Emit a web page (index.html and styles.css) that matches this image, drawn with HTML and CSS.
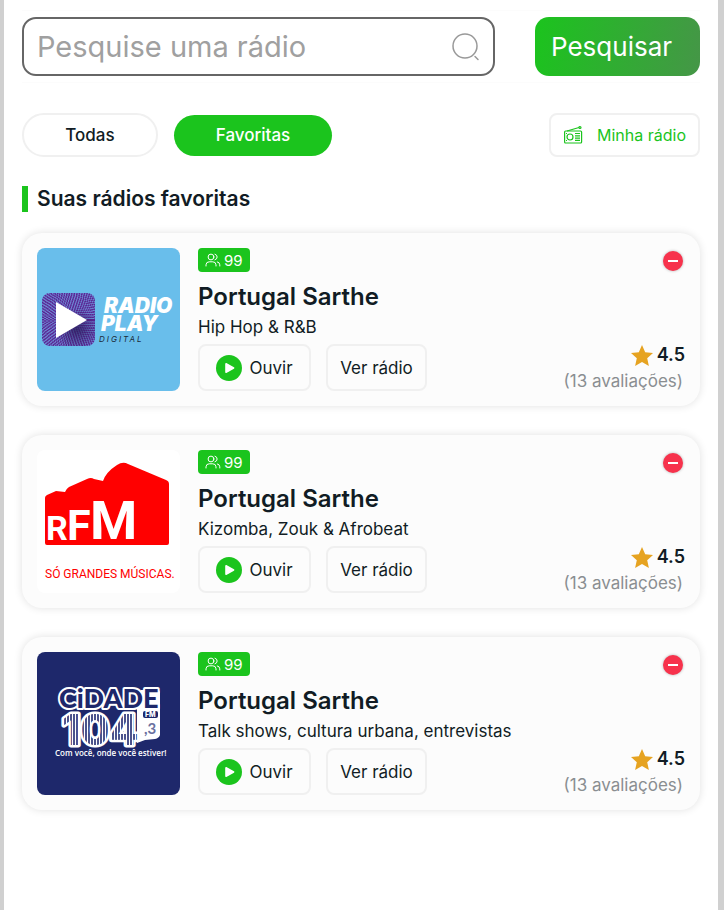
FILE: index.html
```html
<!DOCTYPE html>
<html lang="pt">
<head>
  <meta charset="UTF-8" />
  <meta name="viewport" content="width=device-width, initial-scale=1.0"/>
  <title>Rádios favoritas</title>
  <link rel="stylesheet" href="styles.css">
</head>
<body>

  <svg class="sprite" aria-hidden="true">
    <symbol id="icon-users" viewBox="0 0 16 14">
      <g fill="none" stroke="currentColor" stroke-width="1" stroke-linecap="round">
        <circle cx="6" cy="4" r="2.9"/>
        <path d="M1 13v-1.2A3.2 3.2 0 0 1 4.200 8.800h3.600A3.200 3.200 0 0 1 11 11.800V13M10 1.200a2.900 2.900 0 0 1 0 5.600M12.300 8.900a3 3 0 0 1 2.500 2.900V13"/>
      </g>
    </symbol>
    <symbol id="icon-play" viewBox="0 0 26 26">
      <circle cx="13" cy="13" r="13" fill="#1bc41d"/>
      <path d="M10 8.800v8.400l7.600-4.200z" fill="#fff" stroke="#fff" stroke-width="1.600" stroke-linejoin="round"/>
    </symbol>
    <symbol id="icon-star" viewBox="0 0 22 21">
      <path d="M11 0l3.200 7.200 7.800.8-5.800 5.200 1.700 7.800-6.900-4-6.900 4 1.700-7.800L0 8l7.800-.8z" fill="#e6a321"/>
    </symbol>
  </svg>

  <main class="page">
    <form class="search">
      <div class="search-box">
        <input type="text" aria-label="Pesquise uma rádio" placeholder="Pesquise uma rádio"/>
        <svg class="search-icon" viewBox="0 0 28 28" fill="none" stroke="#999" stroke-width="1.500" stroke-linecap="round" aria-hidden="true">
          <circle cx="13" cy="13" r="12"/>
          <path d="M23 23.500l3 3"/>
        </svg>
      </div>
      <button type="button" class="search-button">Pesquisar</button>
    </form>

    <nav class="filters">
      <button class="tab">Todas</button>
      <button class="tab active">Favoritas</button>
      <a href="#" class="my-radio">
        <svg width="20" height="20" viewBox="0 0 20 20" fill="none" stroke="currentColor" stroke-width="1.200" aria-hidden="true">
          <rect x="1.600" y="6" width="17" height="12" rx="1"/>
          <circle cx="7" cy="12" r="3"/>
          <path d="M4 6l12-3.500M12 8.500h5M12 10.800h5M12 13.100h5M12 15.400h5M3 8.500h1M3 15.500h1"/>
          <circle cx="17" cy="2.500" r="1"/>
        </svg>
        Minha rádio
      </a>
    </nav>

    <h2>Suas rádios favoritas</h2>

    <div class="radio-list">
      <article class="card">
        <svg class="cover" viewBox="0 0 143 143" role="img" aria-label="Radio Play Digital">
          <defs>
            <clipPath id="play-clip"><rect x="5" y="45" width="53" height="53" rx="8"/></clipPath>
            <radialGradient id="play-shade" cx=".65" cy=".68" r=".4">
              <stop offset="0" stop-color="#2a1c5c" stop-opacity=".8"/>
              <stop offset="1" stop-color="#2a1c5c" stop-opacity="0"/>
            </radialGradient>
          </defs>
          <rect width="143" height="143" fill="#69beeb"/>
          <g clip-path="url(#play-clip)">
            <rect x="5" y="45" width="53" height="53" fill="#6f8fd8"/>
            <g fill="none" stroke="#5a2492" stroke-width="2" stroke-dasharray="1.500 1">
              <circle cx="31" cy="72" r="3"/>
              <circle cx="31" cy="72" r="5"/>
              <circle cx="31" cy="72" r="7"/>
              <circle cx="31" cy="72" r="9"/>
              <circle cx="31" cy="72" r="11"/>
              <circle cx="31" cy="72" r="13"/>
              <circle cx="31" cy="72" r="15"/>
              <circle cx="31" cy="72" r="17"/>
              <circle cx="31" cy="72" r="19"/>
              <circle cx="31" cy="72" r="21"/>
              <circle cx="31" cy="72" r="23"/>
              <circle cx="31" cy="72" r="25"/>
              <circle cx="31" cy="72" r="27"/>
              <circle cx="31" cy="72" r="29"/>
              <circle cx="31" cy="72" r="31"/>
              <circle cx="31" cy="72" r="33"/>
              <circle cx="31" cy="72" r="35"/>
            </g>
            <rect x="5" y="45" width="53" height="53" fill="url(#play-shade)"/>
          </g>
          <path d="M19 54l31 18-31 18z" fill="#fff"/>
          <text class="play-name" x="67" y="65">RADIO</text>
          <text class="play-name" x="64" y="83">PLAY</text>
          <text class="play-sub" x="62" y="94">DIGITAL</text>
        </svg>
        <div class="info">
          <span class="listeners"><svg width="16" height="14" aria-hidden="true"><use href="#icon-users"/></svg>99</span>
          <h3>Portugal Sarthe</h3>
          <p>Hip Hop &amp; R&amp;B</p>
          <div class="actions">
            <button class="listen"><svg width="26" height="26" aria-hidden="true"><use href="#icon-play"/></svg>Ouvir</button>
            <button>Ver rádio</button>
          </div>
        </div>
        <div class="side">
          <button class="remove" aria-label="Remover"></button>
          <div class="rating">
            <div class="score"><svg width="22" height="21" aria-hidden="true"><use href="#icon-star"/></svg>4.5</div>
            <div class="reviews">(13 avaliações)</div>
          </div>
        </div>
      </article>

      <article class="card">
        <svg class="cover" viewBox="0 0 143 143" role="img" aria-label="RFM">
          <rect width="143" height="143" fill="#fff"/>
          <path d="M8 48q0-2 2-3l9-4 9 1q1-3 4-5l18-8q4-2 7 0l9 2q3-9 14-16 6-4 11-1l38 16q3 1 3 4v59q0 2-2 2H10q-2 0-2-2z" fill="#f00"/>
          <text class="rfm-name" x="9" y="90" font-size="34">R</text>
          <text class="rfm-name" x="30" y="90" font-size="43">F</text>
          <text class="rfm-name" x="53" y="89" font-size="54">M</text>
          <text class="rfm-sub" x="8" y="128">SÓ GRANDES MÚSICAS.</text>
        </svg>
        <div class="info">
          <span class="listeners"><svg width="16" height="14" aria-hidden="true"><use href="#icon-users"/></svg>99</span>
          <h3>Portugal Sarthe</h3>
          <p>Kizomba, Zouk &amp; Afrobeat</p>
          <div class="actions">
            <button class="listen"><svg width="26" height="26" aria-hidden="true"><use href="#icon-play"/></svg>Ouvir</button>
            <button>Ver rádio</button>
          </div>
        </div>
        <div class="side">
          <button class="remove" aria-label="Remover"></button>
          <div class="rating">
            <div class="score"><svg width="22" height="21" aria-hidden="true"><use href="#icon-star"/></svg>4.5</div>
            <div class="reviews">(13 avaliações)</div>
          </div>
        </div>
      </article>

      <article class="card">
        <svg class="cover" viewBox="0 0 143 143" role="img" aria-label="Cidade FM 104,3">
          <defs>
            <pattern id="stripes" width="3" height="10" patternUnits="userSpaceOnUse">
              <rect width="3" height="10" fill="#fff"/>
              <rect width="2" height="10" fill="#4b538c"/>
            </pattern>
          </defs>
          <rect width="143" height="143" fill="#1e286b"/>
          <path d="M104 38h17q2 0 2 2v43q-1 3-5 4l-10 1-8 3V54z" fill="#fff"/>
          <text class="cidade-number" x="25" y="93">104</text>
          <text class="cidade-name" x="22" y="56">CiDADE</text>
          <rect x="106" y="59" width="15" height="7" rx="2" fill="#1e286b"/>
          <text class="cidade-fm" x="108" y="65">FM</text>
          <text class="cidade-decimal" x="107" y="82">,3</text>
          <text class="cidade-sub" x="18" y="104">Com você, onde você estiver!</text>
        </svg>
        <div class="info">
          <span class="listeners"><svg width="16" height="14" aria-hidden="true"><use href="#icon-users"/></svg>99</span>
          <h3>Portugal Sarthe</h3>
          <p>Talk shows, cultura urbana, entrevistas</p>
          <div class="actions">
            <button class="listen"><svg width="26" height="26" aria-hidden="true"><use href="#icon-play"/></svg>Ouvir</button>
            <button>Ver rádio</button>
          </div>
        </div>
        <div class="side">
          <button class="remove" aria-label="Remover"></button>
          <div class="rating">
            <div class="score"><svg width="22" height="21" aria-hidden="true"><use href="#icon-star"/></svg>4.5</div>
            <div class="reviews">(13 avaliações)</div>
          </div>
        </div>
      </article>
    </div>
  </main>

</body>
</html>
```
FILE: styles.css
```css
* {
  box-sizing: border-box;
}
body {
  margin: 0;
  font-family: Inter, "Liberation Sans", sans-serif;
  color: #111c24;
  background: #fff;
}
button, input {
  font-family: inherit;
  color: inherit;
}
button {
  cursor: pointer;
}
.sprite {
  display: none;
}
.page {
  min-height: 100vh;
  padding: 10px 18px 20px;
  border-left: 4px solid #d0d0d0;
  border-right: 6px solid #d0d0d0;
}
.search {
  display: flex;
  gap: 40px;
  padding: 6px 0;
  border-top: 1px solid #fcfcfc;
  border-bottom: 1px solid #fcfcfc;
}
.search-box {
  flex: 1;
  min-width: 0;
  display: flex;
  align-items: center;
  height: 59px;
  padding: 0 13px;
  border: 2px solid #666;
  border-radius: 14px;
}
.search-box input {
  flex: 1;
  min-width: 0;
  padding: 0;
  border: none;
  outline: none;
  background: none;
  font-size: 29px;
}
.search-box input::placeholder {
  color: #a0a0a0;
  opacity: 1;
}
.search-icon {
  flex: none;
  width: 28px;
  height: 28px;
}
.search-button {
  flex: none;
  width: 165px;
  padding: 0 16px;
  border: none;
  border-radius: 14px;
  background: linear-gradient(100deg, #1bc41d, #459647);
  color: #fff;
  font-size: 26px;
  text-align: left;
}
.filters {
  display: flex;
  align-items: center;
  gap: 16px;
  margin-top: 30px;
}
.tab {
  width: 136px;
  height: 44px;
  border: 2px solid #f0f0f0;
  border-radius: 22px;
  background: #fff;
  font-size: 17px;
  font-weight: 500;
}
.tab.active {
  width: 158px;
  height: 41px;
  border: none;
  background: #1bc41d;
  color: #fff;
}
.my-radio {
  display: flex;
  align-items: center;
  gap: 14px;
  height: 44px;
  margin-left: auto;
  padding: 0 12px;
  border: 2px solid #f0f0f0;
  border-radius: 8px;
  color: #1bc41d;
  font-size: 16px;
  text-decoration: none;
}
h2 {
  margin: 29px 0 21px;
  padding-left: 9px;
  border-left: 6px solid #1bc41d;
  font-size: 21px;
  line-height: 26px;
  font-weight: 600;
}
.radio-list {
  display: flex;
  flex-direction: column;
  gap: 29px;
}
.card {
  display: flex;
  gap: 18px;
  padding: 15px;
  border-radius: 20px;
  background: #fcfcfc;
  box-shadow: 0 0 8px rgba(0, 0, 0, 0.12);
}
.cover {
  flex: none;
  width: 143px;
  height: 143px;
  border-radius: 8px;
}
.info {
  flex: 1;
}
.listeners {
  display: flex;
  align-items: center;
  gap: 3px;
  width: 52px;
  height: 24px;
  padding-left: 7px;
  border-radius: 4px;
  background: #1bc41d;
  color: #fff;
  font-size: 15px;
}
h3 {
  margin: 9px 0 2px;
  font-size: 24px;
  line-height: 32px;
  font-weight: 600;
}
.info p {
  margin: 0 0 5px;
  font-size: 17px;
  line-height: 24px;
}
.actions {
  display: flex;
  gap: 15px;
}
.actions button {
  display: flex;
  align-items: center;
  justify-content: center;
  gap: 7px;
  width: 101px;
  height: 47px;
  padding: 0;
  border: 2px solid #f0f0f0;
  border-radius: 8px;
  background: #fcfcfc;
  font-size: 17px;
}
.actions .listen {
  width: 113px;
}
.side {
  display: flex;
  flex-direction: column;
  align-items: flex-end;
  justify-content: space-between;
}
.remove {
  display: flex;
  align-items: center;
  justify-content: center;
  width: 20px;
  height: 20px;
  margin: 3px 2px 0 0;
  padding: 0;
  border: none;
  border-radius: 50%;
  background: #f7324c;
  box-shadow: 0 0 3px rgba(0, 0, 0, 0.3);
}
.remove::before {
  content: "";
  width: 10px;
  height: 2px;
  background: #fff;
}
.score {
  display: flex;
  align-items: center;
  justify-content: flex-end;
  gap: 4px;
  font-size: 18px;
  line-height: 32px;
  font-weight: 600;
}
.reviews {
  padding-right: 2px;
  color: #8a8e91;
  font-size: 17px;
  line-height: 20px;
}

/* logos */
.play-name {
  fill: #fff;
  font: italic 900 21px Inter, sans-serif;
}
.play-sub {
  fill: #1b2a38;
  font: italic 400 8px Inter, sans-serif;
  letter-spacing: 2px;
}
.rfm-name {
  fill: #fff;
  font-family: Roboto, sans-serif;
  font-weight: 700;
}
.rfm-sub {
  fill: #f00;
  font: 400 12px Roboto, sans-serif;
}
.cidade-name {
  fill: #1e286b;
  stroke: #fff;
  stroke-width: 4px;
  stroke-linejoin: round;
  paint-order: stroke;
  font: 900 27px Lato, sans-serif;
}
.cidade-number {
  fill: url(#stripes);
  stroke: #fff;
  stroke-width: 5px;
  stroke-linejoin: round;
  paint-order: stroke;
  font: 800 42px Inter, sans-serif;
}
.cidade-fm {
  fill: #fff;
  font: 800 7px Inter, sans-serif;
}
.cidade-decimal {
  fill: #6a719f;
  font: 700 15px Lato, sans-serif;
}
.cidade-sub {
  fill: #fff;
  font: 600 8px "Open Sans", sans-serif;
}
```
